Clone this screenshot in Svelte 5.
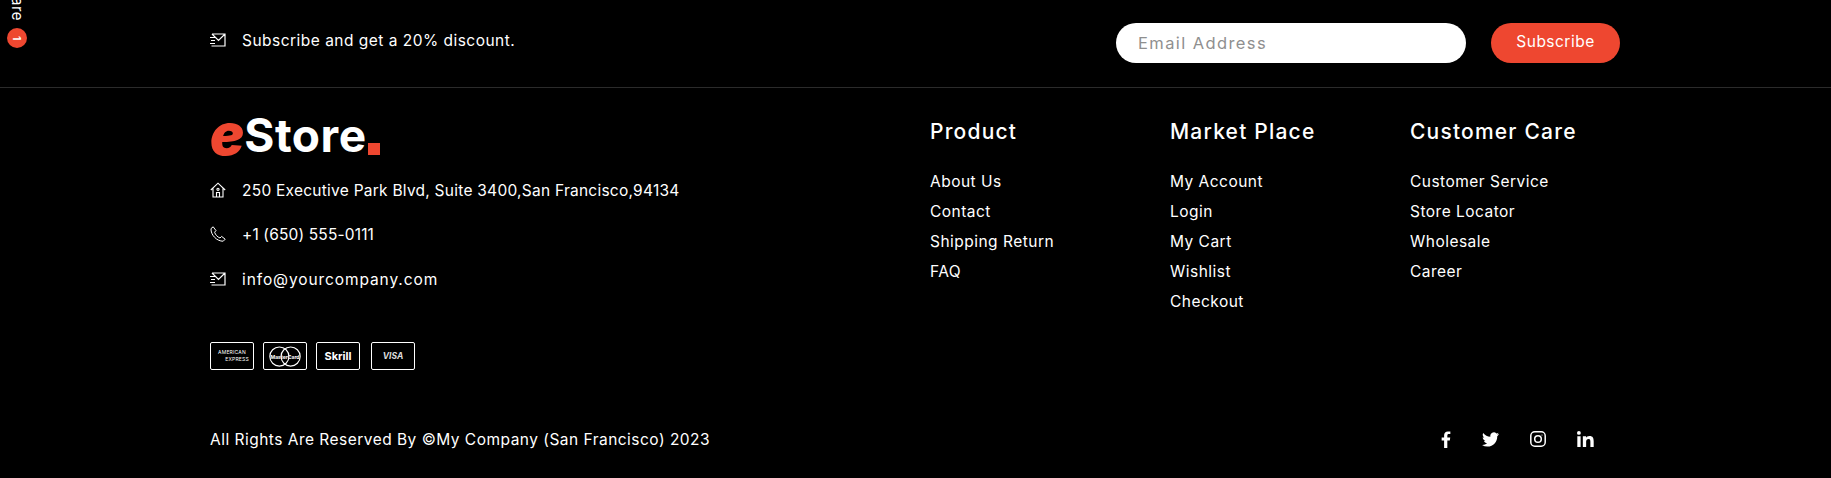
<script lang="ts">
	const columns = [
		{ title: 'Product', links: ['About Us', 'Contact', 'Shipping Return', 'FAQ'] },
		{ title: 'Market Place', links: ['My Account', 'Login', 'My Cart', 'Wishlist', 'Checkout'] },
		{ title: 'Customer Care', links: ['Customer Service', 'Store Locator', 'Wholesale', 'Career'] }
	];
</script>

{#snippet mail()}
	<svg class="icon mail-icon" viewBox="0 0 16 14" fill="none" stroke="#fff" stroke-width="1.2">
		<path d="M2 1H15V13H1.500M2 1l6.500 6.500L15 1M0 4.500H5M1 7.500H5M0 10.500H5" />
	</svg>
{/snippet}

<footer class="footer">
	<div class="side-tab">
		<span class="side-label">are</span>
		<span class="side-badge">1</span>
	</div>

	<section class="subscribe">
		<div class="container subscribe-row">
			<div class="info-line">
				{@render mail()}
				<span>Subscribe and get a 20% discount.</span>
			</div>
			<form class="subscribe-form">
				<input type="text" placeholder="Email Address" />
				<button type="button">Subscribe</button>
			</form>
		</div>
	</section>

	<section class="container main-row">
		<div class="contact">
			<div class="logo"><span class="logo-e">e</span><span class="logo-name">Store</span><span class="logo-dot"></span></div>
			<div class="info-line address">
				<svg class="icon" viewBox="0 0 16 16" fill="none" stroke="#fff" stroke-width="1.100">
					<path d="M0.800 8 8 1.200 15.200 8M3 6.500V15h10V6.500M6.500 15v-4.500h3V15" />
					<circle cx="8" cy="7.300" r="1.100" />
				</svg>
				<span>250 Executive Park Blvd, Suite 3400,San Francisco,94134</span>
			</div>
			<div class="info-line phone">
				<svg class="icon" viewBox="0 0 16 16" fill="none" stroke="#fff" stroke-width="1">
					<path d="M1 2.600 3.200 0.800 6 4.600 4.600 6.200C5.400 8.800 7.400 11 10 12L11.600 10.400 15.200 13.200 13.200 15.200C7 15.400 0.600 9 1 2.600Z" />
				</svg>
				<span>+1 (650) 555-0111</span>
			</div>
			<div class="info-line mail-line">
				{@render mail()}
				<span>info@yourcompany.com</span>
			</div>
			<div class="payments">
				<div class="card amex"><span>AMERICAN</span><span class="amex-2">EXPRESS</span></div>
				<div class="card">
					<svg class="mc" viewBox="0 0 32 20" fill="none" stroke="#fff" stroke-width="1">
						<circle cx="11" cy="10" r="8.500" />
						<circle cx="21" cy="10" r="8.500" />
						<text x="16" y="11.800" text-anchor="middle" class="mc-text">MasterCard</text>
					</svg>
				</div>
				<div class="card skrill">Skrill</div>
				<div class="card visa">VISA</div>
			</div>
		</div>

		<div class="link-columns">
			{#each columns as col}
				<div class="link-col">
					<h4>{col.title}</h4>
					<ul>
						{#each col.links as link}
							<li>{link}</li>
						{/each}
					</ul>
				</div>
			{/each}
		</div>
	</section>

	<section class="container bottom-row">
		<span>All Rights Are Reserved By ©My Company (San Francisco) 2023</span>
		<div class="social">
			<svg class="fb" viewBox="0 0 10 18" fill="#fff">
				<path d="M3 18V10H0.400V7H3V4.600C3 1.800 4.600 0.400 7 0.400 8.200 0.400 9.200 0.500 9.600 0.600V3.200H8C6.700 3.200 6.400 3.900 6.400 4.800V7H9.500L9 10H6.400V18Z" />
			</svg>
			<svg class="tw" viewBox="0 0 24 20" fill="#fff">
				<path d="M24 2.400c-.9.400-1.800.7-2.800.8 1-.6 1.800-1.600 2.200-2.700-1 .6-2 1-3.100 1.200A4.900 4.900 0 0 0 11.900 6.200C7.800 6 4.200 4 1.700.9.400 3.200 1 6 3.200 7.500c-.8 0-1.500-.2-2.200-.6 0 2.400 1.700 4.400 3.900 4.900-.7.200-1.500.2-2.200.1.600 2 2.400 3.400 4.600 3.400A9.900 9.900 0 0 1 0 17.800 14 14 0 0 0 7.500 20c9.100 0 14.300-7.700 14-14.600 1-.7 1.800-1.600 2.500-3Z" />
			</svg>
			<svg class="ig" viewBox="0 0 16 16" fill="none" stroke="#fff" stroke-width="1.500">
				<rect x="0.800" y="0.800" width="14.400" height="14.400" rx="4" />
				<circle cx="8" cy="8" r="3.300" />
				<circle cx="12" cy="4" r="0.600" fill="#fff" stroke="none" />
			</svg>
			<svg class="li" viewBox="0 0 16 15" fill="#fff">
				<path d="M0.300 5H3.400V15H0.300ZM1.800 0a1.800 1.800 0 1 1 0 3.600 1.800 1.800 0 0 1 0-3.600ZM5.500 5H8.500V6.400C9 5.500 10.100 4.700 11.700 4.700 15 4.700 15.700 6.800 15.700 9.600V15H12.600V10.200C12.600 9 12.600 7.500 11 7.500 9.300 7.500 8.600 8.800 8.600 10.100V15H5.500Z" />
			</svg>
		</div>
	</section>
</footer>

<style>
	:global(body) {
		margin: 0;
		background: #000;
	}

	.footer {
		position: relative;
		height: 478px;
		overflow: hidden;
		background: #000;
		color: #fff;
		font-family: 'Inter', 'Liberation Sans', sans-serif;
		font-size: 15.500px;
		letter-spacing: 0.480px;
	}

	.container {
		width: 1410px;
		margin-left: 210px;
	}

	/* cart tab cut off at the top left */
	.side-tab {
		position: absolute;
		top: 0;
		left: 7px;
		width: 20px;
	}

	.side-label {
		position: absolute;
		top: -3px;
		left: 3px;
		writing-mode: vertical-rl;
		font-size: 15px;
		line-height: 15px;
	}

	.side-badge {
		position: absolute;
		top: 28px;
		left: 0;
		width: 20px;
		height: 20px;
		border-radius: 50%;
		background: #ee4730;
		font-size: 10px;
		font-weight: 700;
		line-height: 20px;
		text-align: center;
		writing-mode: vertical-rl;
	}

	.subscribe {
		height: 87px;
		border-bottom: 1px solid #2b2b2b;
	}

	.subscribe-row {
		display: flex;
		justify-content: space-between;
		padding-top: 23px;
	}

	.subscribe-row .info-line {
		margin-top: 5px;
	}

	.subscribe-form {
		display: flex;
		gap: 25px;
	}

	.subscribe-form input {
		box-sizing: border-box;
		width: 350px;
		height: 40px;
		padding: 0 22px;
		border: 0;
		border-radius: 20px;
		background: #fff;
		font: inherit;
		font-size: 16.500px;
		letter-spacing: 1.400px;
	}

	.subscribe-form input::placeholder {
		color: #8f8f8f;
		opacity: 1;
	}

	.subscribe-form button {
		width: 129px;
		height: 40px;
		padding: 0 0 3px;
		border: 0;
		border-radius: 20px;
		background: #ee4730;
		color: #fff;
		font: inherit;
		letter-spacing: inherit;
	}

	.info-line {
		display: flex;
		align-items: center;
		gap: 16px;
		height: 24px;
		white-space: nowrap;
	}

	.icon {
		flex: none;
		width: 16px;
		height: 16px;
	}

	.mail-icon {
		height: 14px;
	}

	.main-row {
		display: flex;
		justify-content: space-between;
		height: 302px;
		padding-top: 30px;
		box-sizing: border-box;
	}

	.logo {
		display: flex;
		align-items: flex-end;
		height: 40px;
		font-size: 46px;
		font-weight: 700;
		line-height: 46px;
		letter-spacing: 0.500px;
	}

	.logo-e {
		color: #ee4730;
		font-size: 57px;
		font-style: italic;
		font-weight: 900;
		line-height: 46px;
		letter-spacing: 0;
	}

	.logo-dot {
		width: 12px;
		height: 12px;
		margin: 0 0 3px 1px;
		background: #ee4730;
	}

	.address {
		margin-top: 20px;
		letter-spacing: 0.250px;
	}

	.phone {
		margin-top: 20px;
		letter-spacing: 0.150px;
	}

	.mail-line {
		margin-top: 21px;
		letter-spacing: 0.900px;
	}

	.payments {
		display: flex;
		gap: 9px;
		margin-top: 51px;
	}

	.card {
		box-sizing: border-box;
		display: flex;
		flex-direction: column;
		align-items: center;
		justify-content: center;
		width: 44px;
		height: 28px;
		border: 1.500px solid #fff;
		border-radius: 2px;
		font-weight: 700;
		letter-spacing: 0;
	}

	.amex {
		font-size: 5px;
		font-weight: 400;
		line-height: 7px;
		letter-spacing: 0.200px;
	}

	.amex-2 {
		margin-left: 10px;
	}

	.mc {
		width: 36px;
		height: 23px;
	}

	.mc-text {
		fill: #fff;
		stroke: none;
		font-size: 4.500px;
	}

	.skrill {
		font-size: 11px;
	}

	.visa {
		font-size: 8.500px;
		font-style: italic;
		margin-left: 2px;
		color: #ddd;
	}

	.link-columns {
		display: flex;
		margin-right: -30px;
	}

	.link-col {
		width: 240px;
	}

	.link-col h4 {
		margin: 0;
		font-size: 21px;
		font-weight: 500;
		line-height: 28px;
		letter-spacing: 1.200px;
	}

	.link-col ul {
		margin: 21px 0 0;
		padding: 0;
		list-style: none;
	}

	.link-col li {
		height: 30px;
		line-height: 30px;
	}

	.bottom-row {
		display: flex;
		justify-content: space-between;
		align-items: center;
		height: 30px;
		margin-top: 34px;
	}

	.social {
		display: flex;
		align-items: center;
		gap: 31px;
		margin-right: 26px;
	}

	.fb {
		width: 10px;
		height: 17px;
	}

	.tw {
		width: 17px;
		height: 15px;
	}

	.ig {
		width: 16px;
		height: 16px;
	}

	.li {
		width: 17px;
		height: 16px;
	}
</style>
